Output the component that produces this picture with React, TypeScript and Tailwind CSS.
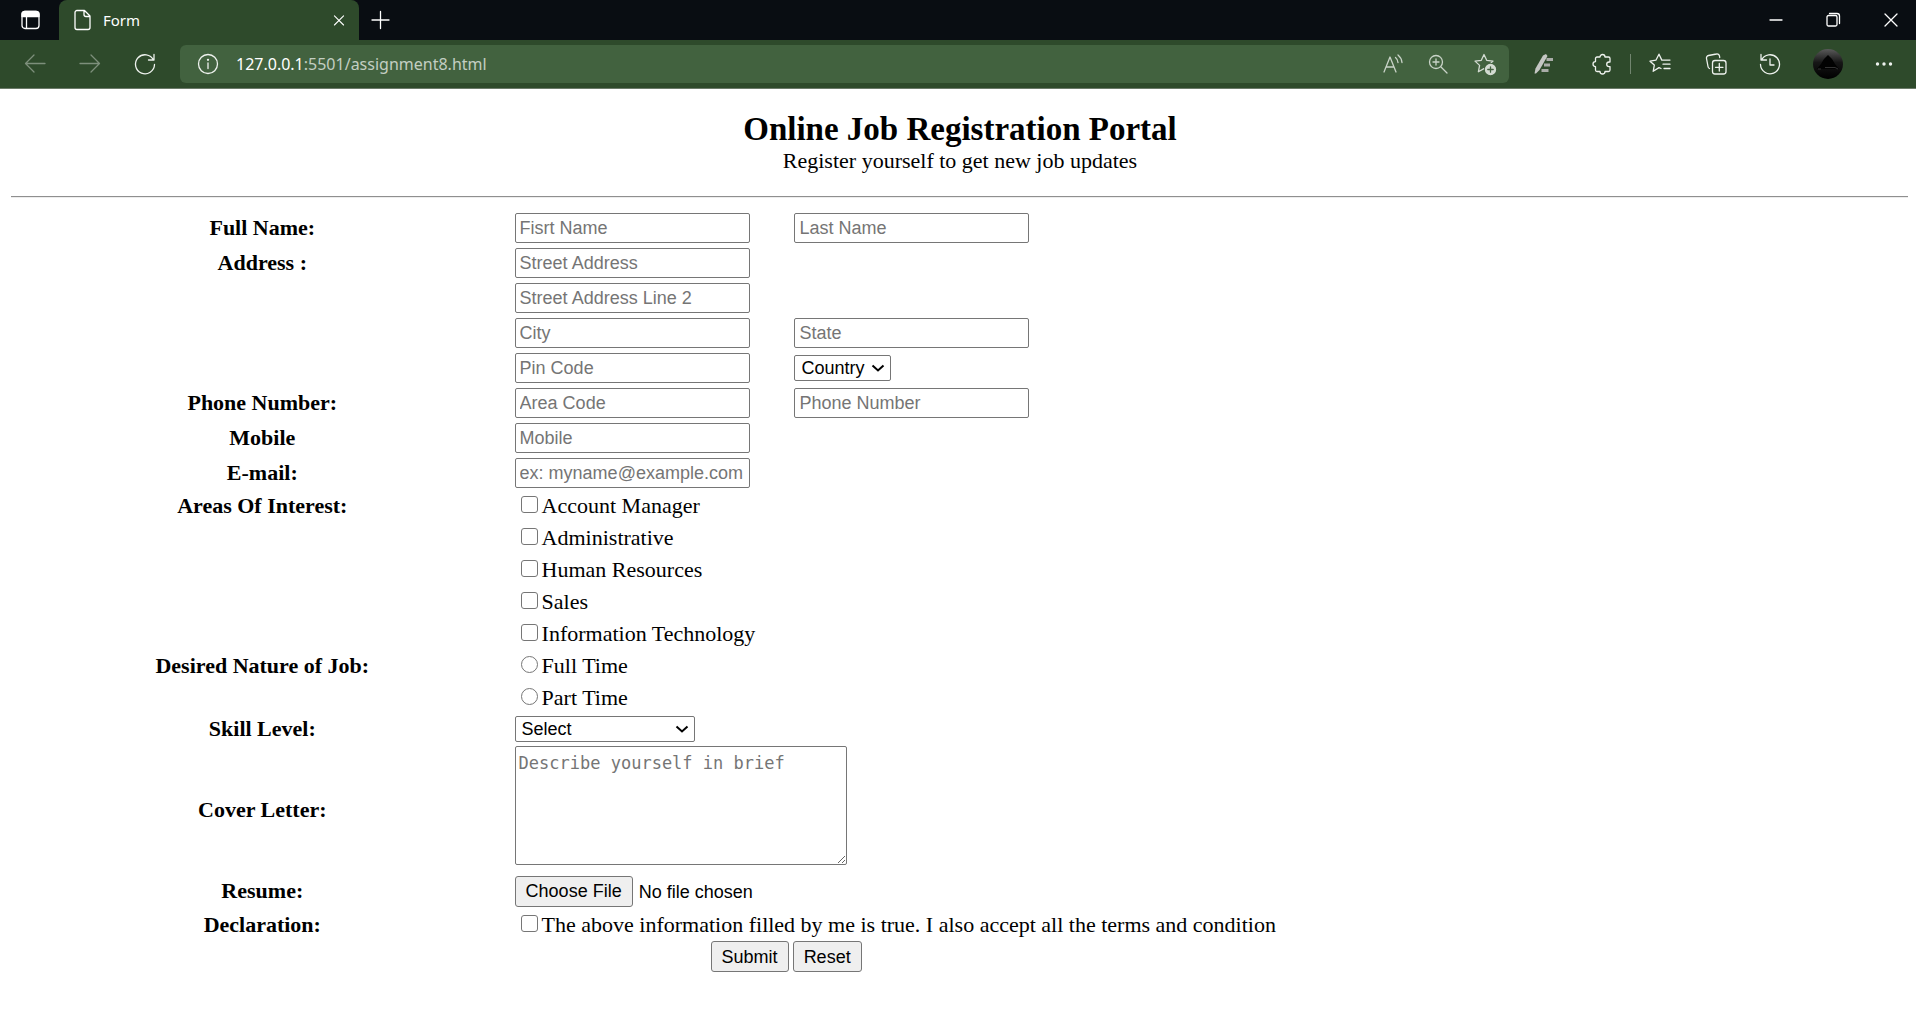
import React from "react";

type IconProps = { children: React.ReactNode; className?: string };

function Icon({ children, className = "size-6" }: IconProps) {
  return (
    <svg
      viewBox="0 0 24 24"
      fill="none"
      stroke="currentColor"
      strokeWidth="1.3"
      strokeLinecap="round"
      strokeLinejoin="round"
      aria-hidden="true"
      className={"shrink-0 " + className}
    >
      {children}
    </svg>
  );
}

const starPath =
  "M11 2.5l2.7 5.8 6.3.8-4.6 4.3 1.2 6.3L11 16.6l-5.6 3.1 1.2-6.3L2 9.1l6.3-.8z";

function ToolButton({ label, className, children }: { label: string; className: string; children: React.ReactNode }) {
  return (
    <button type="button" aria-label={label} className={"flex h-10 items-center justify-center " + className}>
      {children}
    </button>
  );
}

function TabStrip() {
  return (
    <div className="flex h-10 bg-[#090d12] text-white">
      <ToolButton label="Tab actions" className="w-[59px]">
        <Icon>
          <rect x="4" y="3.5" width="17" height="17" rx="3" />
          <path d="M4 8.5V6.500a3 3 0 013-3h11a3 3 0 013 3v2z" fill="currentColor" />
          <path d="M8.500 8v12" />
        </Icon>
      </ToolButton>
      <div className="flex w-[300px] items-center rounded-t-lg bg-[#2e4a2b] pr-2 pl-3">
        <Icon>
          <path d="M6 2.500h7.500l5.500 5.500v11.500a2 2 0 01-2 2H6a2 2 0 01-2-2v-15a2 2 0 012-2z M13 2.500v4a2 2 0 002 2h4" />
        </Icon>
        <span className="ml-2 grow text-[15px]">Form</span>
        <ToolButton label="Close tab" className="w-6">
          <Icon className="size-5">
            <path d="M6.500 7l11 11M17.500 7l-11 11" />
          </Icon>
        </ToolButton>
      </div>
      <ToolButton label="New tab" className="w-[42px]">
        <Icon>
          <path d="M4 12h17M12.500 3.500v17" />
        </Icon>
      </ToolButton>
      <div className="ml-auto flex">
        <ToolButton label="Minimize" className="w-12">
          <Icon>
            <path d="M6 12h12" />
          </Icon>
        </ToolButton>
        <ToolButton label="Restore" className="w-[66px]">
          <Icon>
            <rect x="6" y="7.500" width="10" height="10.500" rx="1.500" />
            <path d="M8.500 5.500H16a2.500 2.500 0 012.500 2.500v7.500" />
          </Icon>
        </ToolButton>
        <ToolButton label="Close" className="w-[50px]">
          <Icon>
            <path d="M6 6l12 12M18 6L6 18" />
          </Icon>
        </ToolButton>
      </div>
    </div>
  );
}

function Toolbar() {
  return (
    <div className="flex h-[49px] items-center border-b border-[#6b7a69] bg-[#2e4a2b] px-2 text-[#eef2ee]">
      <ToolButton label="Back" className="w-[54px] text-[#7d8f7b]">
        <Icon>
          <path d="M22 11.500H2.500M11 3l-8.500 8.500L11 20" />
        </Icon>
      </ToolButton>
      <ToolButton label="Forward" className="w-[55px] text-[#7d8f7b]">
        <Icon>
          <path d="M2 11.500h19.500M13 3l8.500 8.500L13 20" />
        </Icon>
      </ToolButton>
      <ToolButton label="Refresh" className="w-[55px]">
        <Icon>
          <path d="M20.500 8A9.500 9.500 0 1021.500 12.500M21 2.500V8h-5.500" />
        </Icon>
      </ToolButton>
      <div className="ml-2 flex h-[38px] grow items-center rounded-md bg-[#42623f] pl-4">
        <button type="button" aria-label="Site information">
          <Icon>
            <circle cx="12" cy="12" r="9.500" />
            <path d="M12 11v5.500" />
            <circle cx="12" cy="7.800" r=".5" fill="currentColor" />
          </Icon>
        </button>
        <span className="ml-4 grow text-base text-[#c3cec2]">
          <span className="text-white">127.0.0.1</span>:5501/assignment8.html
        </span>
        <ToolButton label="Read aloud" className="w-11 text-[#c9d3c8]">
          <Icon>
            <path d="M3 20L9 5l6 15M5 15h8M14.500 5.500a7 7 0 012.500 5M17 3a11 11 0 014 7.500" />
          </Icon>
        </ToolButton>
        <ToolButton label="Zoom" className="w-[46px] text-[#c9d3c8]">
          <Icon>
            <circle cx="10" cy="10" r="6.500" />
            <path d="M15 15l6 6M7 10h6M10 7v6" />
          </Icon>
        </ToolButton>
        <ToolButton label="Add to favorites" className="w-12 text-[#d3dbd2]">
          <Icon>
            <path d={starPath} />
            <circle cx="17.500" cy="17.500" r="6.500" fill="#42623f" stroke="none" />
            <circle cx="17.500" cy="17.500" r="5" fill="currentColor" />
            <path d="M17.500 14.800v5.400M14.800 17.500h5.400" stroke="#42623f" />
          </Icon>
        </ToolButton>
      </div>
      <ToolButton label="Pen extension" className="ml-1.5 w-[58px] text-[#a9aca8]">
        <Icon>
          <path d="M2.500 21.500l1-5L11 3.500l3-1.500 1.500 2-8 14-3.500 3.500z" fill="#c4c6c3" stroke="none" />
          <path d="M14.500 7.500h6.500M12 13h6M9.500 18.500h7" strokeWidth="2.800" strokeLinecap="butt" />
        </Icon>
      </ToolButton>
      <ToolButton label="Extensions" className="w-[57px]">
        <Icon>
          <path d="M7 5h3a2.500 2.500 0 015 0h3.500a1.500 1.500 0 011.500 1.500V10h-1a2.300 2.300 0 000 4.600h1V18a1.500 1.500 0 01-1.500 1.500H15a2.500 2.500 0 01-5 0H7A1.500 1.500 0 015.500 18v-3.400a2.500 2.500 0 010-5V6.500A1.500 1.500 0 017 5z" />
        </Icon>
      </ToolButton>
      <div className="h-5 w-px bg-[#71856f]" />
      <ToolButton label="Favorites" className="w-[57px]">
        <Icon>
          <path d="M13 16.500l-2-.9-5.800 3.700 1.100-6.200L2 9.200l5.900-1 3.100-6 2.800 5.900h8.200M15 12.200h7M16 16.500h6" />
        </Icon>
      </ToolButton>
      <ToolButton label="Collections" className="w-[55px]">
        <Icon>
          <rect x="8.500" y="8.500" width="13.500" height="13.500" rx="2.500" />
          <path d="M15.300 11.500v7.500M11.500 15.300H19M5.500 16.500A2.500 2.500 0 014 14.500L2.500 6.500a2.500 2.500 0 012-3l8-1.500a2.500 2.500 0 013 2l.2 1.500" />
        </Icon>
      </ToolButton>
      <ToolButton label="History" className="w-[53px]">
        <Icon>
          <path d="M3.500 8A9.500 9.500 0 112.500 12.500M3 2.500V8h5.500M12 7v6h4" />
        </Icon>
      </ToolButton>
      <ToolButton label="Profile" className="w-16">
        <svg viewBox="0 0 30 30" className="size-[30px]" aria-hidden="true">
          <defs>
            <linearGradient id="avatar" x1="0" y1="0" x2="0" y2="1">
              <stop offset="0" stopColor="#5a5a5a" />
              <stop offset=".45" stopColor="#161616" />
              <stop offset="1" stopColor="#000" />
            </linearGradient>
          </defs>
          <circle cx="15" cy="15" r="15" fill="url(#avatar)" />
          <path d="M15 6l4 4 3 5 4 5H4l4-5 3-5z" fill="#020202" />
          <path d="M5 20h3M12 18.500h10l3 1.500" stroke="#333" fill="none" />
        </svg>
      </ToolButton>
      <ToolButton label="Settings and more" className="w-12">
        <Icon>
          <g fill="currentColor" stroke="none">
            <circle cx="5.500" cy="12" r="1.700" />
            <circle cx="12" cy="12" r="1.700" />
            <circle cx="18.500" cy="12" r="1.700" />
          </g>
        </Icon>
      </ToolButton>
    </div>
  );
}

const row = "grid grid-cols-[503fr_279fr_1110fr] items-center";
const wide = "col-span-2 col-start-2";
const control = "rounded-xs border border-[#767676] font-['Liberation_Sans',Arial,sans-serif] text-lg leading-6";
const button = "h-[31px] rounded-[3px] border border-[#767676] bg-[#efefef] px-2.5 font-['Liberation_Sans',Arial,sans-serif] text-lg leading-6";

function TextBox({ id, placeholder, type = "text" }: { id: string; placeholder: string; type?: string }) {
  return (
    <input
      id={id}
      type={type}
      placeholder={placeholder}
      aria-label={placeholder}
      className={control + " h-[30px] w-[235px] bg-white px-1 pt-0.5 placeholder:text-[#757575]"}
    />
  );
}

function RowLabel({ text, htmlFor }: { text: string; htmlFor?: string }) {
  return (
    <label htmlFor={htmlFor} className="col-start-1 text-center font-bold">
      {text}
    </label>
  );
}

function FieldRow({ label, id, children }: { label?: string; id?: string; children: React.ReactNode }) {
  return (
    <div className={row + " h-[35px]"}>
      {label ? <RowLabel text={label} htmlFor={id} /> : <span />}
      {children}
    </div>
  );
}

function DropDown({ id, label, options, className }: { id: string; label: string; options: string[]; className: string }) {
  return (
    <div className={"relative " + className}>
      <select id={id} aria-label={label} className={control + " block h-[26px] w-full appearance-none bg-white pl-1.5"}>
        {options.map((o) => (
          <option key={o}>{o}</option>
        ))}
      </select>
      <svg viewBox="0 0 14 10" fill="none" stroke="black" strokeWidth="2" className="pointer-events-none absolute top-2 right-1.5 h-2.5 w-3.5" aria-hidden="true">
        <path d="M1.500 2.500L7 7.500l5.500-5" />
      </svg>
    </div>
  );
}

function Choice({ type, label, heading, name }: { type: "checkbox" | "radio"; label: string; heading?: string; name: string }) {
  const shape = type === "radio" ? "rounded-full" : "rounded-[3px]";
  return (
    <div className={row + " h-8"}>
      {heading && <span className="text-center font-bold">{heading}</span>}
      <label className={wide + " flex items-center gap-1 pl-1.5"}>
        <input
          type={type}
          name={name}
          className={"mb-1 size-[17px] appearance-none border border-[#767676] bg-white checked:bg-blue-600 " + shape}
        />
        {label}
      </label>
    </div>
  );
}

export default function App() {
  return (
    <div className="min-h-screen bg-white font-['Liberation_Serif','Times_New_Roman',serif] text-[22px] leading-[26px] text-black">
      <header className="font-['Noto_Sans','Segoe_UI',sans-serif] leading-6">
        <TabStrip />
        <Toolbar />
      </header>
      <main className="pr-2 pl-2.5">
        <div className="pt-[21px] pl-0.5 text-center">
          <h1 className="text-[33px] leading-[38px] font-bold">Online Job Registration Portal</h1>
          <p>Register yourself to get new job updates</p>
        </div>
        <hr className="mt-[22px] ml-px border-t border-b border-t-[#8f8f8f] border-b-[#ededed]" />
        <form className="mt-3" onSubmit={(e) => e.preventDefault()}>
          <FieldRow label="Full Name:" id="first-name">
            <TextBox id="first-name" placeholder="Fisrt Name" />
            <TextBox id="last-name" placeholder="Last Name" />
          </FieldRow>
          <FieldRow label="Address :" id="street">
            <TextBox id="street" placeholder="Street Address" />
          </FieldRow>
          <FieldRow>
            <TextBox id="street2" placeholder="Street Address Line 2" />
          </FieldRow>
          <FieldRow>
            <TextBox id="city" placeholder="City" />
            <TextBox id="state" placeholder="State" />
          </FieldRow>
          <FieldRow>
            <TextBox id="pin" placeholder="Pin Code" />
            <DropDown id="country" label="Country" options={["Country"]} className="w-[97px]" />
          </FieldRow>
          <FieldRow label="Phone Number:" id="area">
            <TextBox id="area" placeholder="Area Code" />
            <TextBox id="phone" placeholder="Phone Number" />
          </FieldRow>
          <FieldRow label="Mobile" id="mobile">
            <TextBox id="mobile" placeholder="Mobile" />
          </FieldRow>
          <FieldRow label="E-mail:" id="email">
            <TextBox id="email" type="email" placeholder="ex: myname@example.com" />
          </FieldRow>

          <Choice type="checkbox" name="interest" heading="Areas Of Interest:" label="Account Manager" />
          <Choice type="checkbox" name="interest" label="Administrative" />
          <Choice type="checkbox" name="interest" label="Human Resources" />
          <Choice type="checkbox" name="interest" label="Sales" />
          <Choice type="checkbox" name="interest" label="Information Technology" />
          <Choice type="radio" name="nature" heading="Desired Nature of Job:" label="Full Time" />
          <Choice type="radio" name="nature" label="Part Time" />

          <div className={row + " h-[30px]"}>
            <RowLabel text="Skill Level:" htmlFor="skill" />
            <DropDown id="skill" label="Skill Level" options={["Select"]} className="w-[180px]" />
          </div>
          <div className={row + " pt-0.5"}>
            <RowLabel text="Cover Letter:" htmlFor="cover" />
            <div className={wide + " pb-2"}>
              <textarea
                id="cover"
                placeholder="Describe yourself in brief"
                className="block h-[119px] w-[332px] rounded-xs border border-[#767676] bg-white px-[3px] py-1 font-['DejaVu_Sans_Mono',monospace] text-[17px] leading-6 placeholder:text-[#757575]"
              />
            </div>
          </div>
          <div className={row + " h-9"}>
            <RowLabel text="Resume:" htmlFor="resume" />
            <div className={wide}>
              <input
                id="resume"
                type="file"
                className="block w-[300px] font-['Liberation_Sans',Arial,sans-serif] text-lg leading-6 file:mr-1.5 file:h-[31px] file:rounded-[3px] file:border file:border-solid file:border-[#767676] file:bg-[#efefef] file:px-2.5 file:text-lg file:leading-6"
              />
            </div>
          </div>
          <Choice
            type="checkbox"
            name="declaration"
            heading="Declaration:"
            label="The above information filled by me is true. I also accept all the terms and condition"
          />
          <div className={row}>
            <div className={wide + " ml-49 flex gap-1"}>
              <button type="submit" className={button}>Submit</button>
              <button type="reset" className={button}>Reset</button>
            </div>
          </div>
        </form>
      </main>
    </div>
  );
}
